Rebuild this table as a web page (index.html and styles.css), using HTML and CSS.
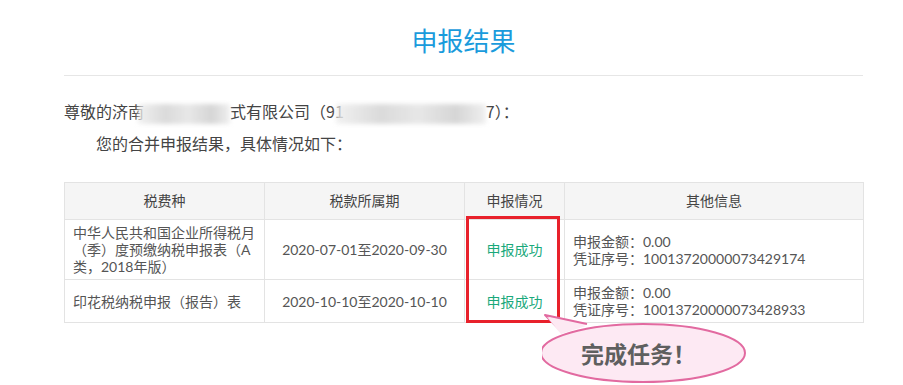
FILE: index.html
```html
<!DOCTYPE html>
<html lang="zh-CN">
<head>
<meta charset="utf-8">
<title>申报结果</title>
<link rel="stylesheet" href="styles.css">
</head>
<body>
<div class="page">
  <div class="header">申报结果</div>
  <p class="greet">尊敬的济南<span class="blur blur-a"></span>式有限公司（91<span class="blur blur-b"></span>7）：</p>
  <p class="intro">您的合并申报结果，具体情况如下：</p>
  <table class="result">
    <colgroup>
      <col class="c1"><col class="c2"><col class="c3"><col class="c4">
    </colgroup>
    <thead>
      <tr><th>税费种</th><th>税款所属期</th><th>申报情况</th><th>其他信息</th></tr>
    </thead>
    <tbody>
      <tr>
        <td class="left">中华人民共和国企业所得税月<br>（季）度预缴纳税申报表（A<br>类，2018年版）</td>
        <td class="center">2020-07-01至2020-09-30</td>
        <td class="center ok">申报成功</td>
        <td class="left">申报金额：0.00<br>凭证序号：10013720000073429174</td>
      </tr>
      <tr>
        <td class="left">印花税纳税申报（报告）表</td>
        <td class="center">2020-10-10至2020-10-10</td>
        <td class="center ok">申报成功</td>
        <td class="left">申报金额：0.00<br>凭证序号：10013720000073428933</td>
      </tr>
    </tbody>
  </table>
  <div class="highlight"></div>
  <div class="bubble">
    <svg class="bubble-shape" width="230" height="75" viewBox="0 0 230 75">
      <path d="M 20 22 L 3 5 L 45 14" fill="#fde9f3" stroke="#e26aa0" stroke-width="2" stroke-linejoin="round"/>
      <ellipse cx="101" cy="43" rx="102" ry="29" fill="#fde9f3" stroke="#e26aa0" stroke-width="2"/>
      <path d="M 19 24 L 5 7 L 44 16 Z" fill="#fde9f3" stroke="none"/>
    </svg>
    <span class="bubble-text">完成任务！</span>
  </div>
</div>
</body>
</html>
```
FILE: styles.css
```css
html, body {
  margin: 0;
  padding: 0;
  background: #ffffff;
}
body {
  font-family: "Noto Sans CJK SC", "Noto Sans", sans-serif;
  color: #444;
}
.page {
  position: relative;
  width: 799px;
  min-height: 385px;
  margin-left: 64px;
}
.header {
  padding-top: 22px;
  height: 53px;
  border-bottom: 1px solid #e6e6e6;
  text-align: center;
  font-size: 26px;
  line-height: 36px;
  color: #1a9bdc;
}
.greet, .intro {
  margin: 0;
  font-size: 16px;
  line-height: 32px;
  color: #444;
}
.greet { margin-top: 19px; }
.intro { text-indent: 2em; }
.blur {
  display: inline-block;
  vertical-align: middle;
  height: 20px;
  background: linear-gradient(90deg, #eeeeee, #d2d2d2 30%, #e2e2e2 55%, #cccccc 80%, #ececec);
  filter: blur(2px);
  opacity: 0.8;
}
.blur-a { width: 92px; margin-left: -6px; }
.blur-b { width: 150px; margin-left: -8px; }
.result {
  margin-top: 23px;
  width: 799px;
  border-collapse: collapse;
  table-layout: fixed;
  font-family: "Lato", "Noto Sans CJK SC", sans-serif;
  font-size: 14px;
  color: #555;
}
.c1 { width: 200px; }
.c2 { width: 200px; }
.c3 { width: 100px; }
.c4 { width: 299px; }
.result th, .result td {
  border: 1px solid #e3e3e3;
}
.result th {
  background: #f5f5f5;
  font-weight: normal;
  color: #444;
  padding: 10px 8px;
  line-height: 16px;
}
.result td {
  padding: 4px 8px;
  line-height: 17px;
}
.left { text-align: left; }
.center { text-align: center; }
.ok { color: #1aa97b; }
.highlight {
  position: absolute;
  left: 402px;
  top: 216px;
  width: 88px;
  height: 101px;
  border: 3px solid #e8212b;
}
.bubble {
  position: absolute;
  left: 478px;
  top: 310px;
  width: 230px;
  height: 75px;
}
.bubble-shape {
  position: absolute;
  left: 0;
  top: 0;
}
.bubble-text {
  position: absolute;
  left: 39px;
  top: 28px;
  white-space: nowrap;
  font-size: 23px;
  line-height: 30px;
  font-weight: bold;
  color: #5f5f5f;
}
```
